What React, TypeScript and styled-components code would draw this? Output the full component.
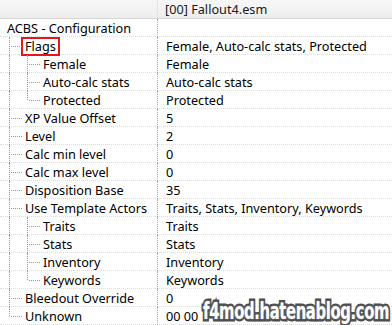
import React from 'react';
import styled, {createGlobalStyle} from 'styled-components';

const GlobalStyle = createGlobalStyle`
  html, body {
    margin: 0;
    padding: 0;
    background: #fff;
  }
  body {
    font-family: 'Noto Sans', 'Liberation Sans', sans-serif;
    font-size: 12.7px;
    color: #000;
  }
`;

const ROW_H = 18;
const NAME_W = 158;
const INDENT = 18;

type Guide = 'none' | 'pass' | 'tee' | 'end';

type Record = {
  name: string;
  value: string;
  guides: Guide[];
  marked?: boolean;
};

const records: Record[] = [
  {name: 'ACBS - Configuration', value: '', guides: []},
  {name: 'Flags', value: 'Female, Auto-calc stats, Protected', guides: ['tee'], marked: true},
  {name: 'Female', value: 'Female', guides: ['pass', 'tee']},
  {name: 'Auto-calc stats', value: 'Auto-calc stats', guides: ['pass', 'tee']},
  {name: 'Protected', value: 'Protected', guides: ['pass', 'end']},
  {name: 'XP Value Offset', value: '5', guides: ['tee']},
  {name: 'Level', value: '2', guides: ['tee']},
  {name: 'Calc min level', value: '0', guides: ['tee']},
  {name: 'Calc max level', value: '0', guides: ['tee']},
  {name: 'Disposition Base', value: '35', guides: ['tee']},
  {name: 'Use Template Actors', value: 'Traits, Stats, Inventory, Keywords', guides: ['tee']},
  {name: 'Traits', value: 'Traits', guides: ['pass', 'tee']},
  {name: 'Stats', value: 'Stats', guides: ['pass', 'tee']},
  {name: 'Inventory', value: 'Inventory', guides: ['pass', 'tee']},
  {name: 'Keywords', value: 'Keywords', guides: ['pass', 'end']},
  {name: 'Bleedout Override', value: '0', guides: ['tee']},
  {name: 'Unknown', value: '00 00', guides: ['end']}
];

const View = styled.div`
  position: relative;
  width: 392px;
  height: 325px;
  overflow: hidden;
  background: #fff;
`;

const Header = styled.div`
  display: flex;
  height: 18px;
  background: linear-gradient(#f7f7f7, #eeeeee);
  border-bottom: 1px solid #d5d5d5;
`;

const HeaderCell = styled.div<{$w?: number}>`
  display: flex;
  align-items: center;
  box-sizing: border-box;
  ${(p) => (p.$w ? `width: ${p.$w}px; border-right: 1px solid #e2e2e2;` : 'flex: 1;')}
  padding-left: 7px;
  white-space: nowrap;
  color: #1a1a1a;
`;

const Row = styled.div`
  display: flex;
  height: ${ROW_H}px;
  box-sizing: border-box;
  border-bottom: 1px dotted #dcdcdc;
`;

const NameCell = styled.div`
  display: flex;
  align-items: center;
  width: ${NAME_W}px;
  box-sizing: border-box;
  border-right: 1px dotted #a8a8a8;
  margin-bottom: -1px;
  white-space: nowrap;
`;

const ValueCell = styled.div`
  display: flex;
  align-items: center;
  flex: 1;
  padding-left: 8px;
  white-space: nowrap;
`;

const GuideCol = styled.span<{$kind: Guide}>`
  position: relative;
  flex: none;
  width: ${INDENT}px;
  height: ${ROW_H}px;
  align-self: flex-start;

  &::before {
    content: '';
    display: ${(p) => (p.$kind === 'none' ? 'none' : 'block')};
    position: absolute;
    left: 9px;
    top: 0;
    height: ${(p) => (p.$kind === 'end' ? '9px' : `${ROW_H}px`)};
    border-left: 1px dotted #999;
  }

  &::after {
    content: '';
    display: ${(p) => (p.$kind === 'tee' || p.$kind === 'end' ? 'block' : 'none')};
    position: absolute;
    left: 11px;
    top: 9px;
    width: 11px;
    border-top: 1px dotted #999;
  }
`;

const Label = styled.span<{$marked?: boolean}>`
  display: inline-flex;
  align-items: center;
  box-sizing: border-box;
  margin-left: ${(p) => (p.$marked ? '3px' : '7px')};
  ${(p) =>
    p.$marked &&
    `
    height: 19px;
    padding: 0 2px;
    border: 2px solid #e8141b;
  `}
`;

const Watermark = styled.div`
  position: absolute;
  right: 3px;
  bottom: 2px;
  font-family: 'DejaVu Sans Condensed', 'DejaVu Sans', sans-serif;
  font-stretch: condensed;
  font-weight: bold;
  font-size: 23px;
  line-height: 1;
  letter-spacing: -0.5px;
  color: #fff;
  -webkit-text-stroke: 5px #4d4d4d;
  paint-order: stroke fill;
  text-shadow: 0 0 2px #9a9a9a;
  transform: scaleX(0.715);
  transform-origin: right bottom;
  white-space: nowrap;
`;

export default function App() {
  return (
    <>
      <GlobalStyle />
      <View>
        <Header>
          <HeaderCell $w={NAME_W} />
          <HeaderCell>[00] Fallout4.esm</HeaderCell>
        </Header>
        {records.map((r, i) => (
          <Row key={i}>
            <NameCell>
              {r.guides.map((g, j) => (
                <GuideCol key={j} $kind={g} />
              ))}
              <Label $marked={r.marked}>{r.name}</Label>
            </NameCell>
            <ValueCell>{r.value}</ValueCell>
          </Row>
        ))}
        <Watermark>f4mod.hatenablog.com</Watermark>
      </View>
    </>
  );
}
